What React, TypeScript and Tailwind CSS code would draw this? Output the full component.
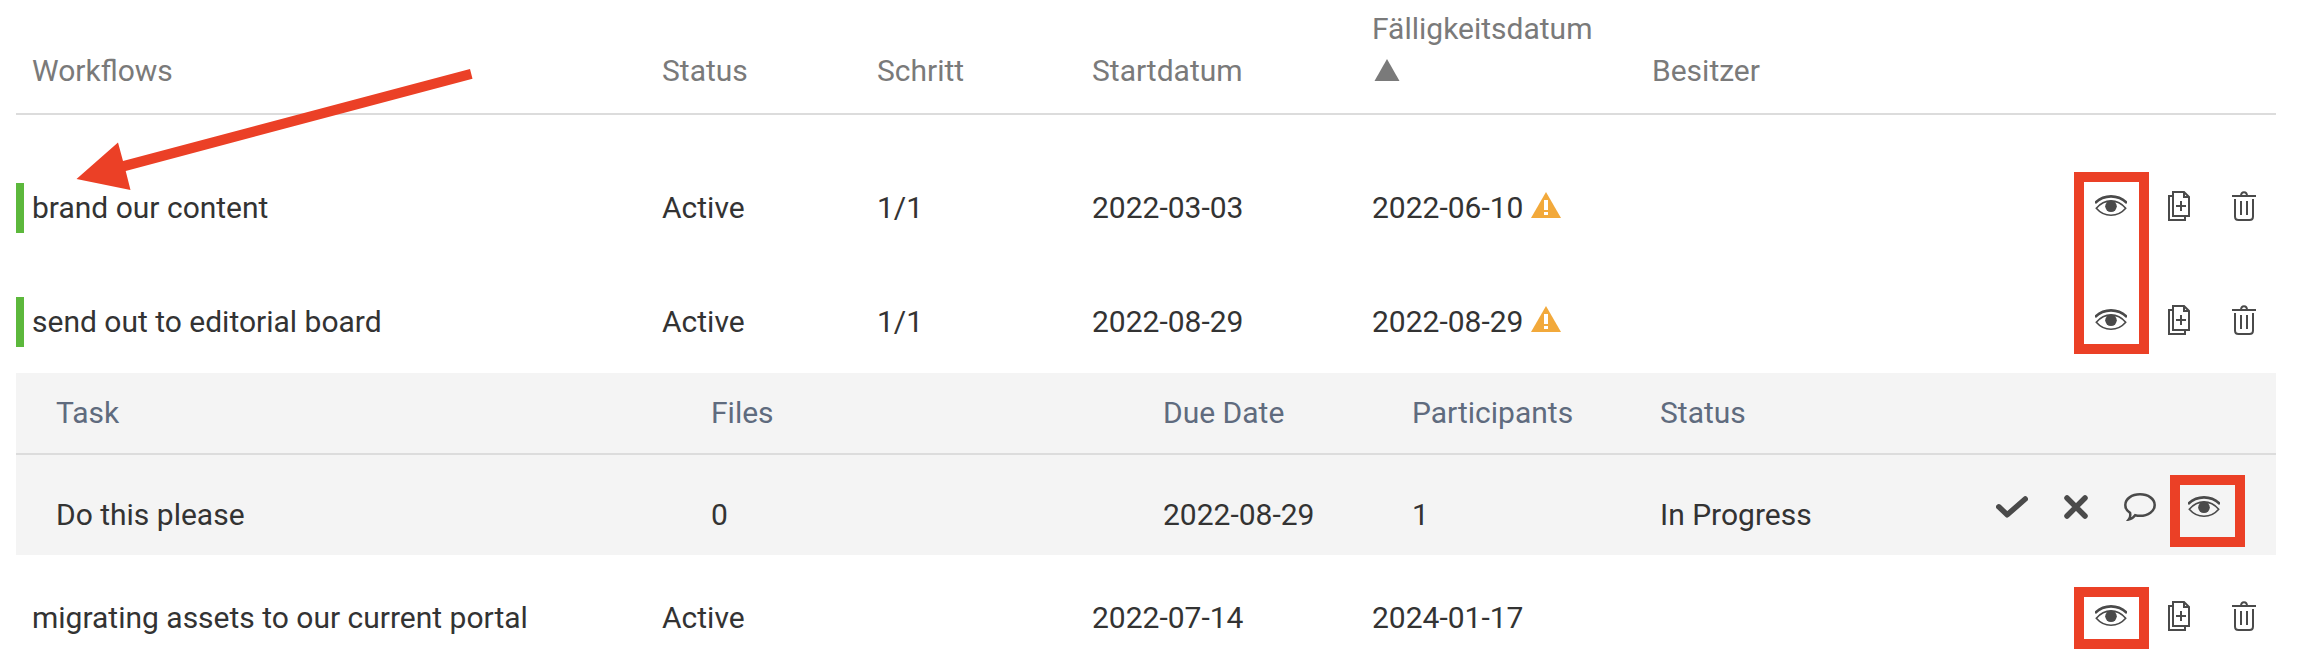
import clsx from 'clsx';
import type { ReactNode } from 'react';

type Workflow = {
  id: number;
  name: string;
  status: string;
  step?: string;
  startDate: string;
  dueDate: string;
  overdue?: boolean;
  marked?: boolean;
  tasks?: Task[];
};

type Task = {
  id: number;
  name: string;
  files: number;
  dueDate: string;
  participants: number;
  status: string;
};

const WORKFLOWS: Workflow[] = [
  { id: 1, name: 'brand our content', status: 'Active', step: '1/1', startDate: '2022-03-03', dueDate: '2022-06-10', overdue: true, marked: true },
  {
    id: 2,
    name: 'send out to editorial board',
    status: 'Active',
    step: '1/1',
    startDate: '2022-08-29',
    dueDate: '2022-08-29',
    overdue: true,
    marked: true,
    tasks: [{ id: 1, name: 'Do this please', files: 0, dueDate: '2022-08-29', participants: 1, status: 'In Progress' }],
  },
  { id: 3, name: 'migrating assets to our current portal', status: 'Active', startDate: '2022-07-14', dueDate: '2024-01-17' },
];

const EyeIcon = () => (
  <svg width="32" height="22" viewBox="0 0 32 22" fill="none" stroke="currentColor">
    <path d="M0 8C4.500 3.600 10 1.400 16 1.400S27.500 3.600 32 8" strokeWidth="2.600" />
    <path d="M1.300 13.300C5.500 8.300 10.500 5.900 16 5.900s10.500 2.400 14.700 7.400C26.500 18.200 21.500 20.300 16 20.300S5.500 18.200 1.300 13.300z" strokeWidth="1.600" />
    <circle cx="16" cy="11.300" r="5.800" fill="currentColor" stroke="none" />
  </svg>
);

const CopyIcon = () => (
  <svg width="23" height="30" viewBox="0 0 23 30" fill="none" stroke="currentColor" strokeWidth="2">
    <path d="M4 5H1v24h16v-3" />
    <path d="M5 1h11l5 5v19H5z" />
    <path d="M16 1v5h5M13 10v10M8 15h10" />
  </svg>
);

const TrashIcon = () => (
  <svg width="24" height="30" viewBox="0 0 24 30" fill="none" stroke="currentColor" strokeWidth="2">
    <path d="M0 5h24M9 5c0-2.400 1.200-3.800 3-3.800S15 2.600 15 5" />
    <path d="M3 8v17.500C3 27.800 4.200 29 6.500 29h11c2.300 0 3.500-1.200 3.500-3.500V8M9 10v14M15 10v14" />
  </svg>
);

const CheckIcon = () => (
  <svg width="32" height="22" viewBox="0 0 32 22" fill="none" stroke="currentColor">
    <path d="M2.800 10.800L11.200 18.800L29.200 3" strokeWidth="5.500" strokeLinecap="round" strokeLinejoin="round" />
  </svg>
);

const CrossIcon = () => (
  <svg width="24" height="24" viewBox="0 0 24 24" fill="none" stroke="currentColor">
    <path d="M3 3l18 18M21 3L3 21" strokeWidth="5.500" strokeLinecap="round" />
  </svg>
);

const CommentIcon = () => (
  <svg width="32" height="28" viewBox="0 0 32 28" fill="none" stroke="currentColor">
    <path
      d="M16 1.300C7.800 1.300 1.300 5.900 1.300 12c0 3.300 1.700 6 4.800 7.900.5 2.700 0 5-1.400 6.700 2.900-.5 5-2 6.500-4.400 1.500.4 3.100.6 4.800.6 8.200 0 14.700-4.700 14.700-10.800S24.200 1.300 16 1.300z"
      strokeWidth="2.500"
    />
  </svg>
);

const WarningIcon = () => (
  <svg width="30" height="26" viewBox="0 0 30 26" className="inline-block align-baseline ml-2" role="img" aria-label="überfällig">
    <path d="M15 0l15 26H0z" fill="#f2a93b" />
    <path d="M13 8h4v10h-4zM13 20h4v3h-4z" fill="#fff" />
  </svg>
);

const IconButton = ({ label, className, children }: { label: string; className?: string; children: ReactNode }) => (
  <button type="button" aria-label={label} className={clsx('flex items-center justify-center cursor-pointer', className)}>
    {children}
  </button>
);

/**
 * Aufgaben eines Workflows
 */
const TaskTable = ({ tasks }: { tasks: Task[] }) => (
  <table className="w-full table-fixed border-separate border-spacing-0 bg-[#f4f4f4] text-left">
    <colgroup>
      <col />
      <col className="w-[452px]" />
      <col className="w-[249px]" />
      <col className="w-[248px]" />
      <col className="w-[280px]" />
      <col className="w-[352px]" />
    </colgroup>
    <thead className="text-[#5f6b7e]">
      <tr className="*:border-b-2 *:border-[#dcdcdc] *:font-normal *:py-[19px]">
        <th className="pl-10">Task</th>
        <th className="pl-4">Files</th>
        <th className="pl-4">Due Date</th>
        <th className="pl-4">Participants</th>
        <th className="pl-4">Status</th>
        <td></td>
      </tr>
    </thead>
    <tbody>
      {tasks.map((task) => (
        <tr key={task.id} className="*:pt-[39px] *:pb-[19px]">
          <td className="pl-10">{task.name}</td>
          <td className="pl-4">{task.files}</td>
          <td className="pl-4">{task.dueDate}</td>
          <td className="pl-4">{task.participants}</td>
          <td className="pl-4">{task.status}</td>
          <td className="pr-14 align-top">
            <div className="flex h-[26px] items-center justify-end gap-8 text-[#4a4a4a]">
              <IconButton label="Erledigen" className="w-8"><CheckIcon /></IconButton>
              <IconButton label="Ablehnen" className="w-8"><CrossIcon /></IconButton>
              <IconButton label="Kommentieren" className="w-8"><CommentIcon /></IconButton>
              <IconButton label="Ansehen" className="w-8"><EyeIcon /></IconButton>
            </div>
          </td>
        </tr>
      ))}
    </tbody>
  </table>
);

const WorkflowRow = ({ workflow }: { workflow: Workflow }) => (
  <>
    <tr className="*:pt-[42px] *:pb-[30px] last:*:pb-6">
      <td className="relative pl-4">
        {workflow.marked && <span className="absolute left-0 top-[38px] h-[50px] w-2 bg-[#5cb83c]"></span>}
        {workflow.name}
      </td>
      <td className="pl-4">{workflow.status}</td>
      <td className="pl-4">{workflow.step}</td>
      <td className="pl-4">{workflow.startDate}</td>
      <td className="pl-4 whitespace-nowrap">
        {workflow.dueDate}
        {workflow.overdue && <WarningIcon />}
      </td>
      <td></td>
      <td className="pr-5 align-top">
        <div className="flex h-[38px] items-center justify-end gap-[41px] text-[#4a4a4a]">
          <IconButton label="Ansehen"><EyeIcon /></IconButton>
          <IconButton label="Kopieren"><CopyIcon /></IconButton>
          <IconButton label="Löschen"><TrashIcon /></IconButton>
        </div>
      </td>
    </tr>
    {workflow.tasks && (
      <tr>
        <td colSpan={7}>
          <TaskTable tasks={workflow.tasks} />
        </td>
      </tr>
    )}
  </>
);

/**
 * Markierungen über der Tabelle
 */
const Annotations = () => (
  <div className="pointer-events-none">
    <svg width="400" height="124" viewBox="0 0 400 124" className="absolute left-[74px] top-[68px]">
      <path d="M2.500 111L44 74.500L49 93L396 1L398.500 10.700L51.700 103L56.500 122z" fill="#eb4026" />
    </svg>
    <div className="absolute right-[159px] top-[172px] h-[182px] w-[75px] border-10 border-[#eb4026]"></div>
    <div className="absolute right-[63px] top-[475px] h-[72px] w-[75px] border-10 border-[#eb4026]"></div>
    <div className="absolute right-[159px] top-[587px] h-[62px] w-[75px] border-10 border-[#eb4026]"></div>
  </div>
);

const App = () => {
  return (
    <div className="relative bg-white pl-4 pr-8 font-[Roboto,sans-serif] text-[30px] leading-[42px] text-[#333333]">
      <table className="w-full table-fixed border-separate border-spacing-0 text-left">
        <colgroup>
          <col />
          <col className="w-[215px]" />
          <col className="w-[215px]" />
          <col className="w-[280px]" />
          <col className="w-[280px]" />
          <col className="w-[320px]" />
          <col className="w-[320px]" />
        </colgroup>
        <thead className="text-[#7a7a7a]">
          <tr className="*:border-b-2 *:border-[#dcdcdc] *:font-normal *:align-bottom *:pt-2 *:pb-[21px]">
            <th className="pl-4">Workflows</th>
            <th className="pl-4">Status</th>
            <th className="pl-4">Schritt</th>
            <th className="pl-4">Startdatum</th>
            <th className="pl-4">
              Fälligkeitsdatum
              <br />
              <svg width="30" height="22" viewBox="0 0 30 22" className="inline-block align-baseline">
                <path d="M15 0l12.500 22h-25z" fill="currentColor" />
              </svg>
            </th>
            <th className="pl-4">Besitzer</th>
            <td></td>
          </tr>
        </thead>
        <tbody>
          <tr aria-hidden="true">
            <td colSpan={7} className="h-[30px]"></td>
          </tr>
          {WORKFLOWS.map((workflow) => (
            <WorkflowRow key={workflow.id} workflow={workflow} />
          ))}
        </tbody>
      </table>
      <Annotations />
    </div>
  );
};

export default App;
